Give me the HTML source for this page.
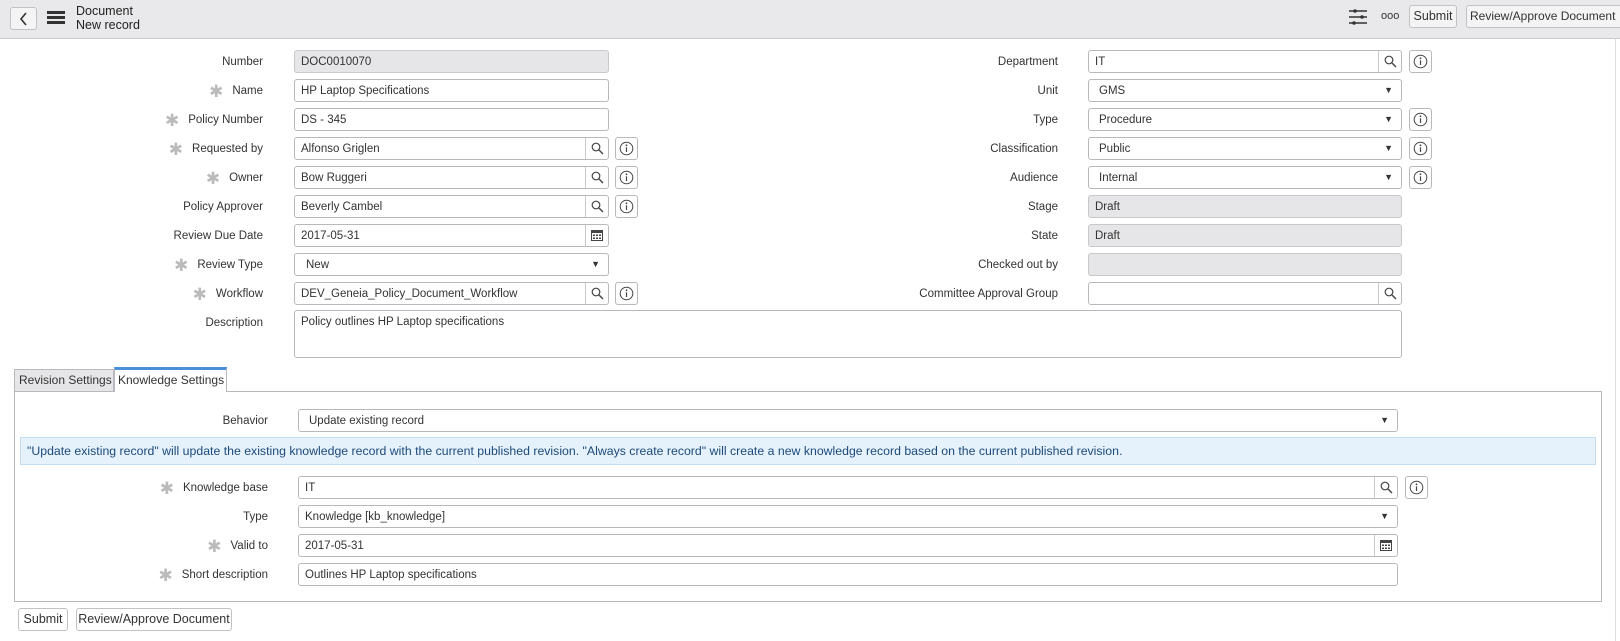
<!DOCTYPE html>
<html><head><meta charset="utf-8">
<style>
*{box-sizing:border-box}
body{margin:0;width:1620px;height:641px;background:#fff;font-family:"Liberation Sans",sans-serif;font-size:11.5px;color:#333;position:relative;overflow:hidden}
.a{position:absolute}
.hdr{left:0;top:0;width:1620px;height:39px;background:#e9e9eb;border-bottom:1px solid #c8c8cc}
.btn{position:absolute;background:#f4f4f5;border:1px solid #c2c2c6;border-radius:3px;font-size:12.5px;color:#333;text-align:center;line-height:21px}
.lbl{position:absolute;text-align:right;font-size:11.5px;color:#333;line-height:25px}
.lbl .s{color:#bbb;font-size:17px;margin-right:9px;vertical-align:-3px}
.in{position:absolute;height:23px;border:1px solid #b9b9bd;border-radius:3px;background:#fff;line-height:23px;padding-left:6px;font-size:11.5px;color:#333}
.ro{background:#e6e6e8;border-color:#c9c9cc}
.sb{position:absolute;right:0;top:0;width:23px;height:21px;border-left:1px solid #c9c9cc}
.arr{position:absolute;right:8px;top:0;font-size:9px;line-height:21px}
.info{position:absolute;width:23px;height:23px;border:1px solid #b9b9bd;border-radius:3px;background:#fff}
</style></head><body>
<div class="a hdr"></div>
<div class="btn" style="left:10px;top:7px;width:27px;height:23px"><svg width="10" height="14" viewBox="0 0 10 14" style="margin-top:4px"><path d="M7 1 L2 7 L7 13" fill="none" stroke="#333" stroke-width="1.6"/></svg></div>
<div class="a" style="left:47px;top:11px;width:18px;height:3px;background:#333;box-shadow:0 5px 0 #333,0 10px 0 #333"></div>
<div class="a" style="left:76px;top:4px;font-size:12.5px;line-height:14px;color:#222">Document<br>New record</div>
<svg class="a" style="left:1349px;top:8px" width="18" height="18" viewBox="0 0 18 18"><g stroke="#333" stroke-width="1.4"><path d="M0 3H18M0 9H18M0 15H18"/></g><circle cx="6" cy="3" r="1.8" fill="#333"/><circle cx="13" cy="9" r="1.8" fill="#333"/><circle cx="5" cy="15" r="1.8" fill="#333"/></svg>
<div class="a" style="left:1381px;top:10px;font-size:11px;color:#333">ooo</div>
<div class="btn" style="left:1409px;top:5px;width:48px;height:23px">Submit</div>
<div class="btn" style="left:1466px;top:5px;width:160px;height:23px;text-align:left;padding-left:3px;font-size:12px;white-space:nowrap">Review/Approve Document</div>
<div class="a" style="left:1615px;top:39px;width:1px;height:602px;background:#ddd"></div>

<!-- left column -->
<div class="lbl" style="left:0;width:263px;top:50px">Number</div><div class="in ro" style="left:294px;top:50px;width:315px">DOC0010070</div>
<div class="lbl" style="left:0;width:263px;top:79px"><span class="s">✱</span>Name</div><div class="in" style="left:294px;top:79px;width:315px">HP Laptop Specifications</div>
<div class="lbl" style="left:0;width:263px;top:108px"><span class="s">✱</span>Policy Number</div><div class="in" style="left:294px;top:108px;width:315px">DS - 345</div>
<div class="lbl" style="left:0;width:263px;top:137px"><span class="s">✱</span>Requested by</div><div class="in" style="left:294px;top:137px;width:315px">Alfonso Griglen<div class="sb"></div></div><div class="info" style="left:615px;top:137px"></div>
<div class="lbl" style="left:0;width:263px;top:166px"><span class="s">✱</span>Owner</div><div class="in" style="left:294px;top:166px;width:315px">Bow Ruggeri<div class="sb"></div></div><div class="info" style="left:615px;top:166px"></div>
<div class="lbl" style="left:0;width:263px;top:195px">Policy Approver</div><div class="in" style="left:294px;top:195px;width:315px">Beverly Cambel<div class="sb"></div></div><div class="info" style="left:615px;top:195px"></div>
<div class="lbl" style="left:0;width:263px;top:224px">Review Due Date</div><div class="in" style="left:294px;top:224px;width:315px">2017-05-31<div class="sb"></div></div>
<div class="lbl" style="left:0;width:263px;top:253px"><span class="s">✱</span>Review Type</div><div class="in" style="left:294px;top:253px;width:315px;padding-left:11px">New<span class="arr">▼</span></div>
<div class="lbl" style="left:0;width:263px;top:282px"><span class="s">✱</span>Workflow</div><div class="in" style="left:294px;top:282px;width:315px">DEV_Geneia_Policy_Document_Workflow<div class="sb"></div></div><div class="info" style="left:615px;top:282px"></div>
<div class="lbl" style="left:0;width:263px;top:311px">Description</div><div class="in" style="left:294px;top:310px;width:1108px;height:48px;line-height:22px">Policy outlines HP Laptop specifications</div>

<!-- right column -->
<div class="lbl" style="left:800px;width:258px;top:50px">Department</div><div class="in" style="left:1088px;top:50px;width:314px">IT<div class="sb"></div></div><div class="info" style="left:1409px;top:50px"></div>
<div class="lbl" style="left:800px;width:258px;top:79px">Unit</div><div class="in" style="left:1088px;top:79px;width:314px;padding-left:10px">GMS<span class="arr">▼</span></div>
<div class="lbl" style="left:800px;width:258px;top:108px">Type</div><div class="in" style="left:1088px;top:108px;width:314px;padding-left:10px">Procedure<span class="arr">▼</span></div><div class="info" style="left:1409px;top:108px"></div>
<div class="lbl" style="left:800px;width:258px;top:137px">Classification</div><div class="in" style="left:1088px;top:137px;width:314px;padding-left:10px">Public<span class="arr">▼</span></div><div class="info" style="left:1409px;top:137px"></div>
<div class="lbl" style="left:800px;width:258px;top:166px">Audience</div><div class="in" style="left:1088px;top:166px;width:314px;padding-left:10px">Internal<span class="arr">▼</span></div><div class="info" style="left:1409px;top:166px"></div>
<div class="lbl" style="left:800px;width:258px;top:195px">Stage</div><div class="in ro" style="left:1088px;top:195px;width:314px">Draft</div>
<div class="lbl" style="left:800px;width:258px;top:224px">State</div><div class="in ro" style="left:1088px;top:224px;width:314px">Draft</div>
<div class="lbl" style="left:800px;width:258px;top:253px">Checked out by</div><div class="in ro" style="left:1088px;top:253px;width:314px"></div>
<div class="lbl" style="left:800px;width:258px;top:282px">Committee Approval Group</div><div class="in" style="left:1088px;top:282px;width:314px"><div class="sb"></div></div>

<!-- tabs -->
<div class="a" style="left:14px;top:369px;width:100px;height:23px;background:#e6e6e8;border:1px solid #b9b9bd;font-size:12px;line-height:21px;padding-left:4px">Revision Settings</div>
<div class="a" style="left:114px;top:367px;width:113px;height:25px;background:#fff;border:1px solid #b9b9bd;border-top:3px solid #4a90d9;border-bottom:none;font-size:12px;line-height:20px;padding-left:3px;z-index:2">Knowledge Settings</div>
<div class="a" style="left:14px;top:391px;width:1588px;height:211px;border:1px solid #b9b9bd"></div>
<div class="lbl" style="left:0;width:268px;top:409px">Behavior</div><div class="in" style="left:298px;top:409px;width:1100px;padding-left:10px">Update existing record<span class="arr">▼</span></div>
<div class="a" style="left:20px;top:437px;width:1576px;height:28px;background:#e5f1fb;border:1px solid #c5ddf0;color:#1d4a7a;font-size:12.3px;line-height:26px;padding-left:6px">"Update existing record" will update the existing knowledge record with the current published revision. "Always create record" will create a new knowledge record based on the current published revision.</div>
<div class="lbl" style="left:0;width:268px;top:476px"><span class="s">✱</span>Knowledge base</div><div class="in" style="left:298px;top:476px;width:1100px">IT<div class="sb"></div></div><div class="info" style="left:1405px;top:476px"></div>
<div class="lbl" style="left:0;width:268px;top:505px">Type</div><div class="in" style="left:298px;top:505px;width:1100px">Knowledge [kb_knowledge]<span class="arr">▼</span></div>
<div class="lbl" style="left:0;width:268px;top:534px"><span class="s">✱</span>Valid to</div><div class="in" style="left:298px;top:534px;width:1100px">2017-05-31<div class="sb"></div></div>
<div class="lbl" style="left:0;width:268px;top:563px"><span class="s">✱</span>Short description</div><div class="in" style="left:298px;top:563px;width:1100px">Outlines HP Laptop specifications</div>

<div class="btn" style="left:18px;top:608px;width:50px;height:23px;background:#fff">Submit</div>
<div class="btn" style="left:76px;top:608px;width:156px;height:23px;background:#fff">Review/Approve Document</div>

<script>
var S='<svg width="13" height="13" viewBox="0 0 13 13" style="position:absolute;left:5px;top:4px"><circle cx="5" cy="5" r="3.8" fill="none" stroke="#444" stroke-width="1.2"/><path d="M8 8L12 12" stroke="#444" stroke-width="1.4"/></svg>';
var C='<svg width="12" height="12" viewBox="0 0 12 12" style="position:absolute;left:5px;top:4px"><rect x="0.5" y="1.5" width="11" height="10" fill="none" stroke="#444"/><rect x="0.5" y="1.5" width="11" height="2.5" fill="#444"/><g fill="#444"><rect x="2" y="5.5" width="2" height="1.5"/><rect x="5" y="5.5" width="2" height="1.5"/><rect x="8" y="5.5" width="2" height="1.5"/><rect x="2" y="8.5" width="2" height="1.5"/><rect x="5" y="8.5" width="2" height="1.5"/><rect x="8" y="8.5" width="2" height="1.5"/></g></svg>';
var I='<svg width="15" height="15" viewBox="0 0 15 15" style="position:absolute;left:3px;top:3px"><circle cx="7.5" cy="7.5" r="6.3" fill="none" stroke="#444" stroke-width="1"/><circle cx="7.5" cy="4.3" r="0.9" fill="#444"/><path d="M7.5 6.3V11" stroke="#444" stroke-width="1.2"/></svg>';
document.querySelectorAll('.sb').forEach(function(e){var t=e.parentNode.textContent;e.innerHTML=/2017/.test(t)?C:S;});
document.querySelectorAll('.info').forEach(function(e){e.innerHTML=I;});
</script>
</body></html>
